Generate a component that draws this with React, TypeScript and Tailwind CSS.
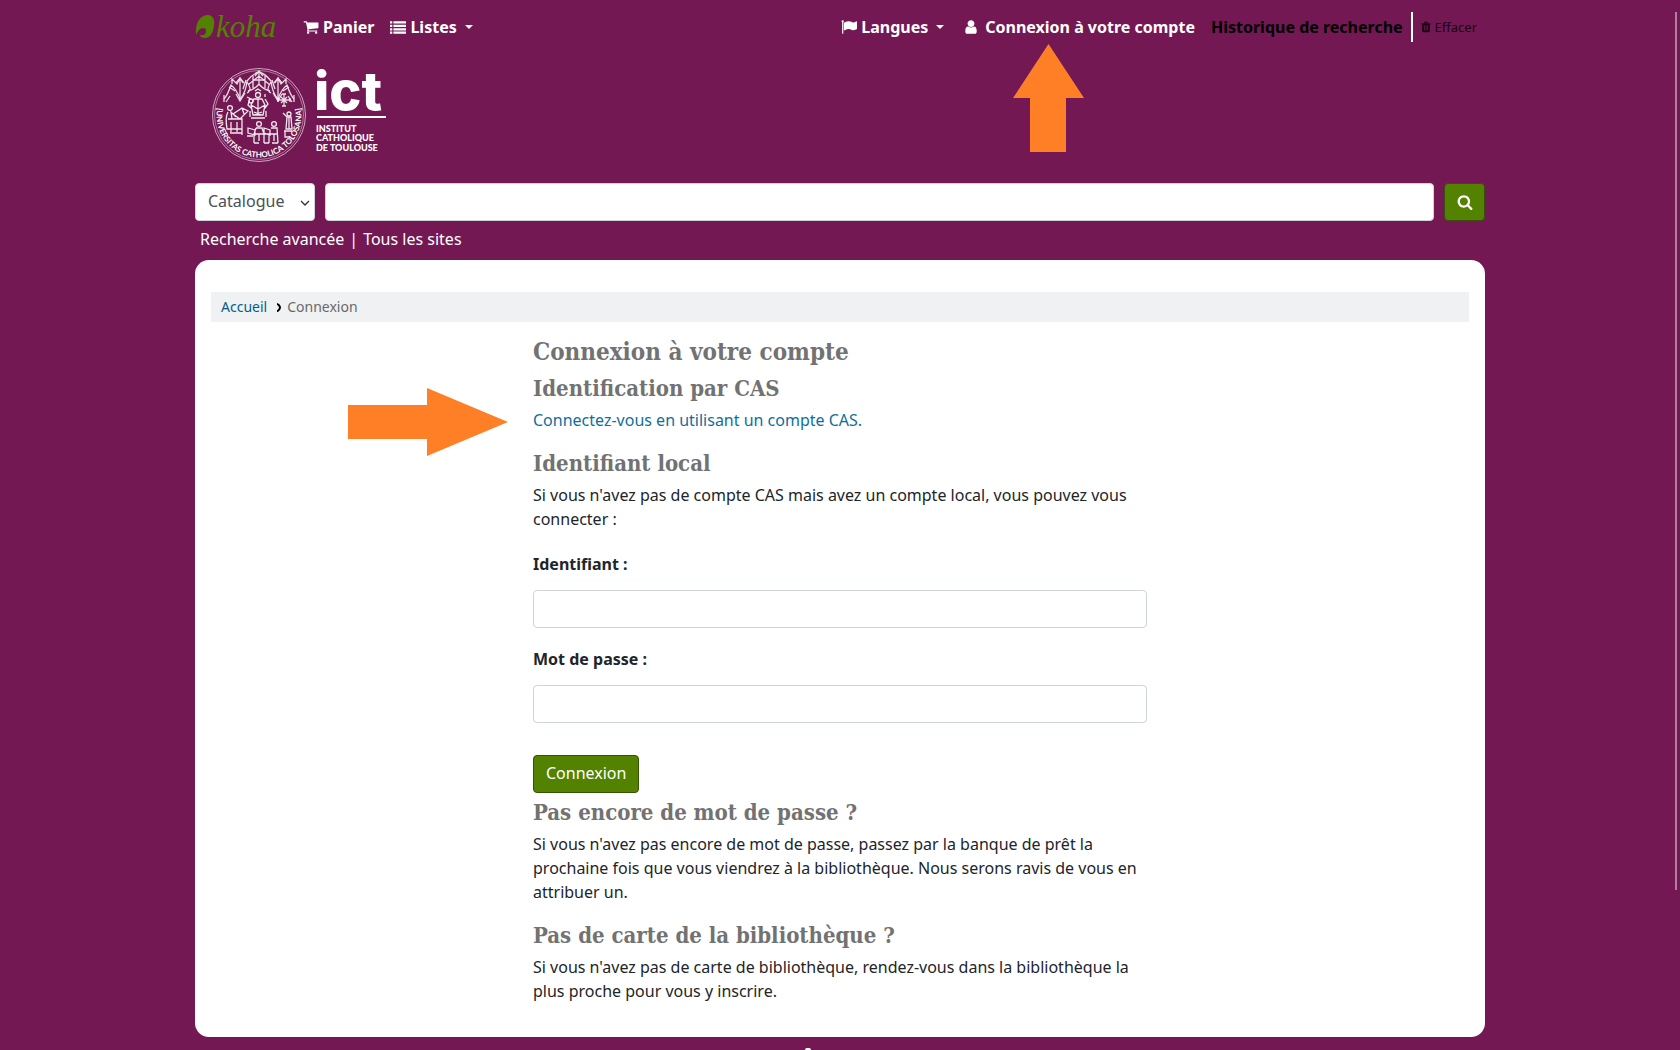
import React, { useState } from 'react';

interface IconProps {
  d: string;
  className?: string;
}

const ICONS = {
  cart: 'M704 1536q0 52-38 90t-90 38-90-38-38-90 38-90 90-38 90 38 38 90zm896 0q0 52-38 90t-90 38-90-38-38-90 38-90 90-38 90 38 38 90zm128-1088v512q0 24-16.5 42.5t-40.5 21.5l-1044 122q13 60 13 70 0 16-24 64h920q26 0 45 19t19 45-19 45-45 19h-1024q-26 0-45-19t-19-45q0-11 8-31.5t16-36 21.5-40 15.5-29.5l-177-823h-204q-26 0-45-19t-19-45 19-45 45-19h256q16 0 28.5 6.5t19.5 15.5 13 24.5 8 26 5.5 29.5 4.5 26h1201q26 0 45 19t19 45z',
  list: 'M0 256h256v256h-256zM384 256h1408v256h-1408zM0 640h256v256h-256zM384 640h1408v256h-1408zM0 1024h256v256h-256zM384 1024h1408v256h-1408zM0 1408h256v256h-256zM384 1408h1408v256h-1408z',
  flag: 'M320 256q0 72-64 110v1266q0 13-9.5 22.5t-22.5 9.5h-64q-13 0-22.5-9.5t-9.5-22.5v-1266q-64-38-64-110 0-53 37.5-90.5t90.5-37.5 90.5 37.5 37.5 90.5zm1472 64v763q0 25-12.5 38.5t-39.5 27.5q-215 116-369 116-61 0-123.5-22t-108.5-48-115.5-48-142.5-22q-192 0-464 146-17 9-33 9-26 0-45-19t-19-45v-742q0-32 31-55 21-14 79-43 236-120 421-120 107 0 200 29t219 88q38 19 88 19 54 0 117.5-21t110-47 88-47 54.5-21q26 0 45 19t19 45z',
  user: 'M1536 1399q0 109-62.5 187t-150.5 78h-854q-88 0-150.5-78t-62.5-187q0-85 8.5-160.5t31.5-152 58.5-131 94-89 134.5-34.5q131 128 313 128t313-128q76 0 134.5 34.5t94 89 58.5 131 31.5 152 8.5 160.5zm-256-887q0 159-112.5 271.5t-271.5 112.5-271.5-112.5-112.5-271.5 112.5-271.5 271.5-112.5 271.5 112.5 112.5 271.5z',
  trash: 'M704 1376v-704q0-14-9-23t-23-9h-64q-14 0-23 9t-9 23v704q0 14 9 23t23 9h64q14 0 23-9t9-23zm256 0v-704q0-14-9-23t-23-9h-64q-14 0-23 9t-9 23v704q0 14 9 23t23 9h64q14 0 23-9t9-23zm256 0v-704q0-14-9-23t-23-9h-64q-14 0-23 9t-9 23v704q0 14 9 23t23 9h64q14 0 23-9t9-23zm-544-992h448l-48-117q-7-9-17-11h-317q-10 2-17 11zm928 32v64q0 14-9 23t-23 9h-96v948q0 83-47 143.5t-113 60.5h-832q-66 0-113-58.5t-47-141.5v-952h-96q-14 0-23-9t-9-23v-64q0-14 9-23t23-9h309l70-167q15-37 54-63t79-26h320q40 0 79 26t54 63l70 167h309q14 0 23 9t9 23z',
  search: 'M1216 832q0-185-131.5-316.5t-316.5-131.5-316.5 131.5-131.5 316.5 131.5 316.5 316.5 131.5 316.5-131.5 131.5-316.5zm512 832q0 52-38 90t-90 38q-54 0-90-38l-343-342q-179 124-399 124-143 0-273.5-55.5t-225-150-150-225-55.5-273.5 55.5-273.5 150-225 225-150 273.5-55.5 273.5 55.5 225 150 150 225 55.5 273.5q0 220-124 399l343 343q37 37 37 90z',
};

const Icon: React.FC<IconProps> = ({ d, className = 'w-4 h-4' }) => (
  <svg viewBox="0 0 1792 1792" fill="currentColor" className={`shrink-0 ${className}`} aria-hidden="true">
    <path d={d} />
  </svg>
);

const Caret = () => (
  <svg viewBox="0 0 8 4" fill="currentColor" className="w-2 h-1 ml-2 shrink-0" aria-hidden="true">
    <path d="M0 0h8L4 4z" />
  </svg>
);

const KohaLogo = () => (
  <svg viewBox="0 0 84 28" className="h-7 w-[84px] overflow-visible font-normal" role="img" aria-label="koha">
    <path
      d="M1 22C0 10 5 2 13 2c5 0 7 5 6 11-1 7-4 12-9 12-3 0-5-1-5-3 4 1 6-1 6-4 0-2-1-3-3-3-3 0-5 3-7 7z"
      fill="#538200"
    />
    <text x="21" y="24" fontSize="31" fontStyle="italic" fontFamily="'Liberation Serif', serif" fill="#538200">koha</text>
  </svg>
);

const IctLogo = () => (
  <svg viewBox="0 0 176 96" className="h-24 w-44 overflow-visible" role="img" aria-label="Institut Catholique de Toulouse">
    <g fill="none" stroke="#fff">
      <circle cx="47" cy="48" r="46.5" strokeWidth="0.9" opacity="0.7" />
      <circle cx="47" cy="48" r="44.5" strokeWidth="0.7" opacity="0.6" />
      {/* gothic canopy */}
      <g strokeWidth="1.3" opacity="0.85">
        <path d="M12 32c3-3 5-8 7-14 5 4 7 8 9 14 4-4 6-9 7-18 4-5 8-8 12-9 4 1 8 4 12 9 1 9 3 14 7 18 2-6 4-10 9-14 2 6 4 11 7 14" />
        <path d="M14 35l4-6M24 27l4 7 5-8M61 26l5 8 4-7M76 29l4 6M35 15c4 6 4 9 0 11M59 15c-4 6-4 9 0 11M36 18l11-9 11 9M41 9v12M47 4v14M53 9v12M36 24c4-1 8-3 11-7 3 4 7 6 11 7" />
        <path d="M20 17v-5l5 5 3-6 3 5M63 16l3-5 3 6 5-5v5M28 11v22M66 11v22M31 22l3-9M63 22l-3-9M17 20l6 4M77 20l-6 4" />
        <path d="M43 9l4-5 4 5M41 13h12M24 16l4-5 4 5M62 16l4-5 4 5M12 28v7M82 28v7" />
      </g>
      {/* seated figure */}
      <g strokeWidth="1.3" opacity="0.9">
        <circle cx="46" cy="28" r="2.5" />
        <path d="M43 24l3-2 3 2M42 32h8l3 6-2 10H41l-2-10zM39 51h14M39 38l7 4 7-4M46 32v16M38 31l-2 7 3 3M53 32l3 5-3 4M38 50v-6M54 50v-6M42 45l8 3M50 45l-8 3" />
        <circle cx="39" cy="34" r="2" />
        <path d="M35 30l4 2M53 30v-3" />
      </g>
      {/* scribe at the desk */}
      <g strokeWidth="1.3" opacity="0.9">
        <circle cx="18" cy="41" r="2.4" />
        <path d="M16 45c-3 5-2 11-1 17h15V52H20l-1-7 5 5M21 47l9-6 6 3-8 8zM30 41l2 6M16 52h14M18 66h12M30 52v16M19 55v10M25 55v10" />
      </g>
      {/* cross */}
      <path d="M72 27v12M66 33h12M70 27h4M70 39h4M66 31v4M78 31v4M69 30l6 6M75 30l-6 6" strokeWidth="1.3" opacity="0.85" />
      {/* standing figure */}
      <g strokeWidth="1.3" opacity="0.9">
        <circle cx="77" cy="47" r="2" />
        <path d="M75 50h4l1 12h-6zM75 50l-4-4M72 64h8M73 64v6h5M77 50v12" />
      </g>
      {/* readers */}
      <g strokeWidth="1.3" opacity="0.9">
        <circle cx="47" cy="57" r="2.4" />
        <circle cx="62" cy="57" r="2.4" />
        <path d="M44 61h6l2 6v9M44 61l-2 6v9M42 67h24M59 61h6l1 15M36 61l7 2v5l-7-2zM52 61l6 2v5l-6-2zM57 67v9M42 76h5M52 76h5M47 67v7M62 67v7M60 76h6M35 69h6" />
      </g>
    </g>
    <path id="seal-arc" d="M8.5 30A42.5 42.5 0 1 0 85.5 30" fill="none" />
    <text fontSize="8" fontWeight="700" fontFamily="Lato, sans-serif" fill="#fff" textAnchor="middle">
      <textPath href="#seal-arc" startOffset="50%">[UNIVERSITAS CATHOLICA TOLOSANA]</textPath>
    </text>
    <text x="102" y="43" fontSize="54" fontWeight="800" fontFamily="Inter, sans-serif" fill="#fff">ict</text>
    <rect x="105" y="49" width="69" height="2" fill="#fff" />
    <g fontSize="9" fontWeight="900" fontFamily="Lato, sans-serif" fill="#fff">
      <text x="104" y="65">INSTITUT</text>
      <text x="104" y="74">CATHOLIQUE</text>
      <text x="104" y="84">DE TOULOUSE</text>
    </g>
  </svg>
);

const Heading: React.FC<{ level?: 1 | 2; children: React.ReactNode }> = ({ level = 2, children }) => {
  const Tag = level === 1 ? 'h1' : 'h2';
  return (
    <Tag className={`mb-1 font-['Roboto_Slab','DejaVu_Serif_Condensed','DejaVu_Serif',serif] font-bold leading-8 text-[#727272] ${level === 1 ? 'text-2xl/8' : 'text-[22px]'}`}>
      {children}
    </Tag>
  );
};

const Navbar = () => (
  <nav className="flex h-[54px] items-center font-bold text-white">
    <a href="#koha" className="mr-6"><KohaLogo /></a>
    <a href="#panier" className="mr-4 flex items-center gap-1">
      <Icon d={ICONS.cart} /> Panier
    </a>
    <button type="button" className="flex items-center">
      <Icon d={ICONS.list} className="mr-1 w-4 h-4" /> Listes <Caret />
    </button>
    <div className="ml-auto flex items-center">
      <button type="button" className="flex items-center">
        <Icon d={ICONS.flag} className="mr-1 w-4 h-4" /> Langues <Caret />
      </button>
      <a href="#connexion" className="relative ml-[19px] mr-4 flex items-center gap-1.5">
        <Icon d={ICONS.user} /> Connexion à votre compte
        <svg viewBox="0 0 71 108" className="absolute left-[50px] top-[29px] h-[108px] w-[71px]" aria-hidden="true">
          <path d="M35.5 0L71 54H53v54H17V54H0z" fill="#ff7f27" />
        </svg>
      </a>
      <a href="#historique" className="text-black">Historique de recherche</a>
      <span className="ml-2 mr-[7px] h-[30px] w-0.5 bg-white" />
      <a href="#effacer" className="mr-2 flex items-center gap-[3px] text-[13px] font-normal text-[#17040f]">
        <Icon d={ICONS.trash} className="w-3 h-3" /> Effacer
      </a>
    </div>
  </nav>
);

const SearchBar = () => {
  const [query, setQuery] = useState('');

  return (
    <form onSubmit={e => e.preventDefault()}>
      <div className="flex items-center">
        <div className="relative mr-2.5 w-[120px]">
          <select
            aria-label="Rechercher dans"
            className="h-[38px] w-full appearance-none rounded border border-[#ced4da] bg-white px-3 pb-0.5 text-[#495057] outline-none"
          >
            <option>Catalogue</option>
          </select>
          <svg viewBox="0 0 10 6" className="pointer-events-none absolute right-[5px] top-[17px] h-1.5 w-2.5" aria-hidden="true">
            <path d="M1 1l4 4 4-4" fill="none" stroke="#333" strokeWidth="1.3" />
          </svg>
        </div>
        <input
          type="text"
          aria-label="Rechercher"
          value={query}
          onChange={e => setQuery(e.target.value)}
          className="h-[38px] min-w-0 grow rounded border border-[#ced4da] bg-white px-3 text-[#495057] outline-none"
        />
        <button
          type="submit"
          aria-label="Rechercher"
          className="ml-2.5 flex h-[38px] w-[41px] items-center justify-center rounded border border-[#3b4d12] bg-[#538200] text-white"
        >
          <Icon d={ICONS.search} />
        </button>
      </div>
      <div className="flex gap-[5px] px-[5px] pb-[9px] pt-1.5 text-white">
        <a href="#avancee">Recherche avancée</a>
        <span>|</span>
        <a href="#sites">Tous les sites</a>
      </div>
    </form>
  );
};

const LoginForm = () => {
  const [userid, setUserid] = useState('');
  const [password, setPassword] = useState('');
  const inputClass = 'mt-3.5 block h-[38px] w-full rounded border border-[#ced4da] bg-white px-3 outline-none';

  return (
    <form className="pb-[3px] pt-[21px]" onSubmit={e => e.preventDefault()}>
      <label htmlFor="userid" className="block font-bold">Identifiant :</label>
      <input id="userid" type="text" value={userid} onChange={e => setUserid(e.target.value)} className={inputClass} />
      <label htmlFor="password" className="mt-[19px] block font-bold">Mot de passe :</label>
      <input id="password" type="password" value={password} onChange={e => setPassword(e.target.value)} className={inputClass} />
      <button type="submit" className="mt-8 block h-[38px] rounded border border-[#355300] bg-[#538200] px-3 pb-0.5 text-white">
        Connexion
      </button>
    </form>
  );
};

const App = () => (
  <div className="relative min-h-screen overflow-hidden bg-[#741854] font-['Noto_Sans',sans-serif] text-base leading-6 text-[#212529]">
    <div className="mx-auto w-full max-w-[1290px]">
      <header>
        <Navbar />
        <a href="#ict" className="ml-[17px] mt-[13px] mb-5 block w-44"><IctLogo /></a>
        <SearchBar />
      </header>

      <main className="rounded-[14px] bg-white px-4 pb-[34px] pt-8">
        <nav aria-label="Fil d'Ariane" className="flex h-[30px] items-center bg-[#f0f1f3] px-2.5 text-sm">
          <a href="#accueil" className="text-[#00608a]">Accueil</a>
          <svg viewBox="0 0 6 9" className="ml-[9px] mr-[5px] h-[9px] w-1.5" aria-hidden="true">
            <path d="M1 1c1 0 3 2 3 3.5S2 8 1 8" fill="none" stroke="#000" strokeWidth="2" />
          </svg>
          <span className="text-[#696969]">Connexion</span>
        </nav>

        <div className="-mx-[15px] flex justify-center pt-3.5">
          <div className="w-1/2 px-[15px]">
            <Heading level={1}>Connexion à votre compte</Heading>
            <Heading>Identification par CAS</Heading>
            <p className="relative mb-[15px]">
              <svg viewBox="0 0 160 68" className="absolute right-full top-[-20px] mr-[25px] h-[68px] w-40" aria-hidden="true">
                <path d="M0 17h79V0l81 34-81 34V51H0z" fill="#ff7f27" />
              </svg>
              <a href="#cas" className="text-[#0f6f9b]">Connectez-vous en utilisant un compte CAS.</a>
            </p>

            <Heading>Identifiant local</Heading>
            <p>Si vous n'avez pas de compte CAS mais avez un compte local, vous pouvez vous connecter :</p>
            <LoginForm />

            <Heading>Pas encore de mot de passe ?</Heading>
            <p className="mb-[15px]">
              Si vous n'avez pas encore de mot de passe, passez par la banque de prêt la prochaine fois que vous
              viendrez à la bibliothèque. Nous serons ravis de vous en attribuer un.
            </p>

            <Heading>Pas de carte de la bibliothèque ?</Heading>
            <p>
              Si vous n'avez pas de carte de bibliothèque, rendez-vous dans la bibliothèque la plus proche pour vous y
              inscrire.
            </p>
          </div>
        </div>
      </main>

      <footer className="flex justify-center pr-16 pt-[11px]">
        <span className="h-0.5 w-1.5 rounded-t-full bg-white" />
      </footer>
    </div>

    {/* scroll thumb */}
    <div className="absolute right-[3px] top-3 h-[878px] w-0.5 bg-[#b07f9e]" />
  </div>
);

export default App;
